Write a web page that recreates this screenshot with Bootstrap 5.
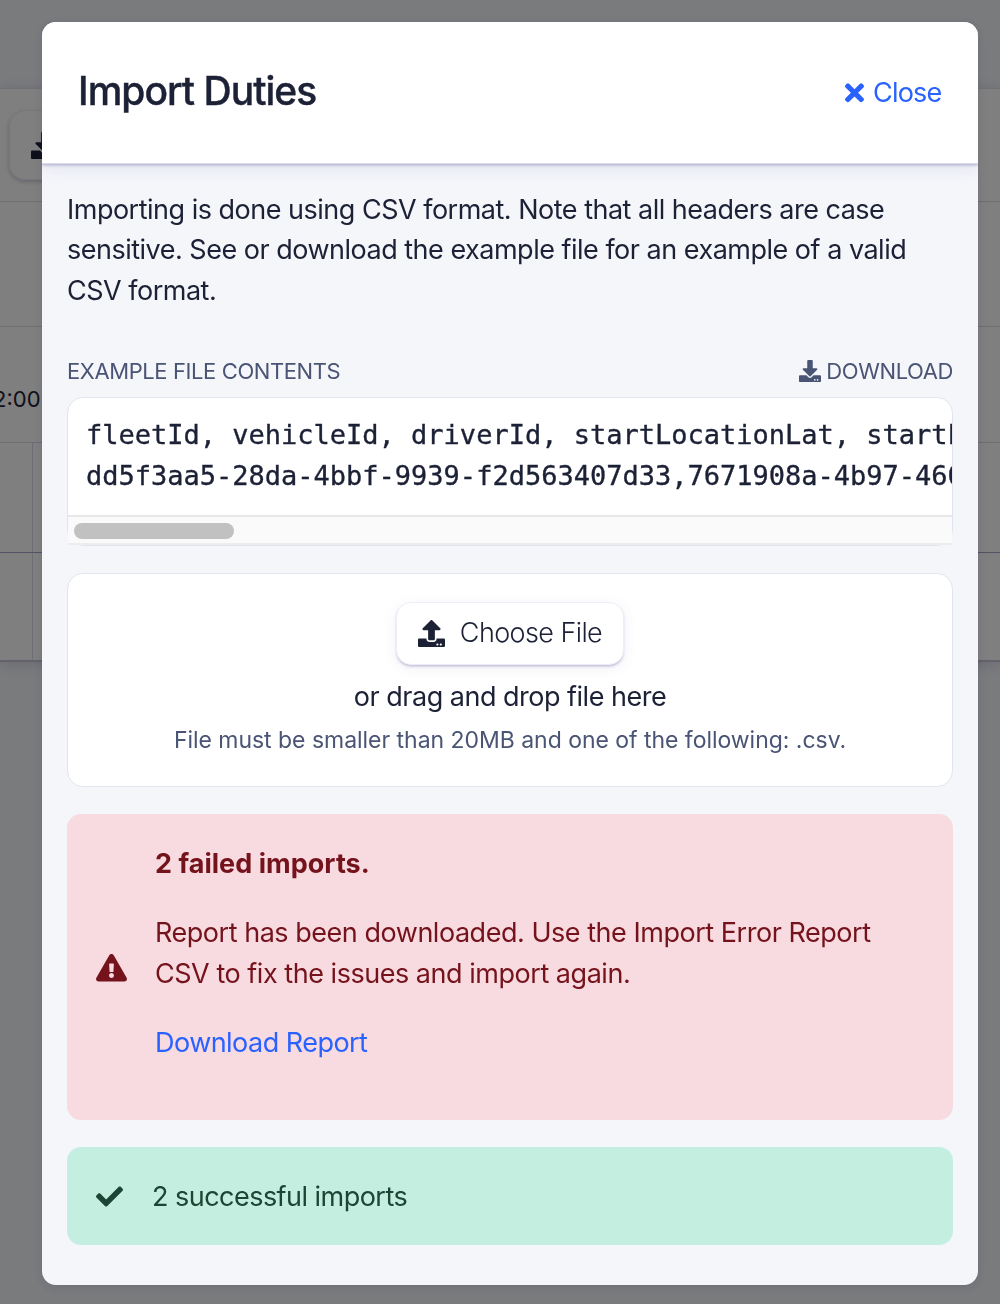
<!DOCTYPE html>
<html lang="en">
<head>
<meta charset="utf-8">
<meta name="viewport" content="width=device-width, initial-scale=1">
<title>Import Duties</title>
<link href="https://cdn.jsdelivr.net/npm/bootstrap@5.3.0/dist/css/bootstrap.min.css" rel="stylesheet">
<style>
  html, body { height: 100%; overflow: hidden; }
  body { font-family: Inter, "Liberation Sans", sans-serif; font-size: 27px; line-height: 40.5px; color: #1c2136; background: #f4f6fa; }
  svg { fill: currentColor; flex: none; display: block; }

  /* page behind the modal */
  .app-top { height: 88px; }
  .app-panel { height: 574px; background: #fff; border-top: 1px solid #e3e5ef; border-bottom: 2px solid #c6c4d8; box-shadow: 0 2px 12px rgba(60,50,120,.18); }
  .app-tools { height: 112px; padding: 21px 0 0 9px; }
  .app-tool-btn { width: 130px; height: 70px; padding-left: 21px; border: 1px solid #eeeef5; border-radius: 16px; box-shadow: 0 2px 4px rgba(60,50,120,.25); }
  .app-line { border-top: 1px solid #dcdce8; }
  .app-r1 { height: 125px; }
  .app-r2 { height: 116px; font-size: 22px; padding-top: 52px; }
  .app-r2 span { margin-left: -7px; }
  .app-cells { padding-left: 32px; }
  .app-cells > div { border-left: 1px solid #dcdaea; }
  .app-r3 { height: 110px; }
  .app-r4 { height: 108px; border-color: #a5a5c8; }
  .modal-backdrop { --bs-backdrop-opacity: .5; }

  /* modal */
  .modal-dialog { width: 936px; max-width: none; margin: 22px 0 0 42px; }
  .modal-content { height: 1263px; border: 0; border-radius: 14px; background: #f4f6fa; color: #1c2136; overflow: hidden; box-shadow: 0 2px 10px rgba(50,40,90,.16); }
  .modal-header { height: 142px; padding: 0 36px; background: #fff; border-bottom: 1px solid #dcdaea; border-radius: 0; box-shadow: 0 1px 3px rgba(80,70,150,.4), 0 4px 16px rgba(80,70,150,.1); z-index: 1; }
  .modal-title { font-size: 39px; font-weight: 500; line-height: 48px; letter-spacing: -.98px; margin-bottom: 4px; -webkit-text-stroke: .4px #1c2136; }
  .blue-link { color: #2962ff; text-decoration: none; }
  .close-link { gap: 9px; letter-spacing: -.8px; padding-right: .5px; }
  .close-link span { padding-top: 1px; }
  .modal-body { padding: 26px 25px 0; }
  .intro { margin-bottom: 42px; line-height: 40.33px; letter-spacing: -.5px; }
  .label-row { height: 36px; margin-bottom: 8px; font-size: 22px; line-height: 36px; letter-spacing: -.4px; color: #4a5474; }
  .label-right { gap: 5px; }
  .csv-box, .drop-box { background: #fff; border: 1px solid #e2e5ef; border-radius: 16px; }
  .csv-box { height: 149px; margin-bottom: 27px; }
  .csv-box pre { height: 117px; margin: 0; padding: 17.3px 0 0 18px; overflow: hidden; border-radius: 15px 15px 0 0; font: 27px/40.5px "DejaVu Sans Mono", monospace; color: #1c2136; -webkit-text-stroke: .35px #1c2136; }
  .csv-track { height: 30px; padding: 6px; background: #fafafa; border-top: 2px solid #e8e8e8; border-bottom: 2px solid #ededed; }
  .csv-thumb { width: 160px; height: 16px; border-radius: 8px; background: #c1c1c1; }
  .drop-box { height: 214px; margin-bottom: 27px; padding-top: 28px; }
  .choose-btn { width: 228px; height: 63px; gap: 15px; font-size: 27px; font-weight: 300; letter-spacing: -.6px; background: #fff; color: #1c2136; border: 1px solid #efeef6; border-radius: 15px; box-shadow: 0 2px 3px -1px rgba(80,70,150,.4), 0 3px 14px rgba(80,70,150,.08); }
  .drop-text { margin-top: 12px; letter-spacing: -.5px; }
  .drop-hint { margin-top: 5px; font-size: 23px; line-height: 36px; letter-spacing: -.03px; color: #4a5474; }
  .note { border-radius: 14px; border: 0; margin: 0; }
  .note-fail { height: 306px; margin-bottom: 27px; padding: 2px 29px 0; gap: 28px; background: #f8dbe0; color: #75131c; }
  .note-fail p { margin-bottom: 28.5px; letter-spacing: -.47px; }
  .note-fail .fail-head { letter-spacing: .03px; }
  .note-fail .fail-text { line-height: 40.9px; }
  .note-fail .fail-link { letter-spacing: -.53px; }
  .note-ok { height: 98px; padding: 2px 29px 0; gap: 29px; background: #c4eee0; color: #1d4535; letter-spacing: -.53px; }
  .note-ok span { padding-top: 1px; }
</style>
</head>
<body>
<svg width="0" height="0" class="position-absolute" aria-hidden="true">
  <symbol id="i-download" viewBox="0 0 512 512"><path d="M216 0h80c13.3 0 24 10.7 24 24v168h87.7c17.8 0 26.7 21.5 14.1 34.1L269.7 378.3c-7.5 7.5-19.8 7.5-27.3 0L90.1 226.1c-12.6-12.6-3.7-34.1 14.1-34.1H192V24c0-13.3 10.7-24 24-24zm296 376v112c0 13.3-10.7 24-24 24H24c-13.3 0-24-10.7-24-24V376c0-13.3 10.7-24 24-24h146.7l49 49c20.1 20.1 52.5 20.1 72.6 0l49-49H488c13.3 0 24 10.7 24 24zm-124 88c0-11-9-20-20-20s-20 9-20 20 9 20 20 20 20-9 20-20zm64 0c0-11-9-20-20-20s-20 9-20 20 9 20 20 20 20-9 20-20z"/></symbol>
</svg>

<div class="app-top"></div>
<div class="app-panel">
  <div class="app-tools"><div class="app-tool-btn d-flex align-items-center"><svg width="27" height="27"><use href="#i-download"/></svg></div></div>
  <div class="app-line app-r1"></div>
  <div class="app-line app-r2"><span>2:00</span></div>
  <div class="app-line app-r3 app-cells"><div class="h-100"></div></div>
  <div class="app-line app-r4 app-cells"><div class="h-100"></div></div>
</div>

<div class="modal-backdrop show"></div>
<div class="modal d-block overflow-hidden" tabindex="-1" role="dialog" aria-labelledby="import-title">
  <div class="modal-dialog">
    <div class="modal-content">
      <div class="modal-header d-flex justify-content-between align-items-center">
        <h1 class="modal-title" id="import-title">Import Duties</h1>
        <a href="#" class="blue-link close-link d-flex align-items-center">
          <svg width="19" height="27.6" viewBox="0 0 352 512"><path d="M242.72 256l100.07-100.07c12.28-12.28 12.28-32.19 0-44.48l-22.24-22.24c-12.28-12.28-32.19-12.28-44.48 0L176 189.28 75.93 89.21c-12.28-12.28-32.19-12.28-44.48 0L9.21 111.45c-12.28 12.28-12.28 32.19 0 44.48L109.28 256 9.21 356.07c-12.28 12.28-12.28 32.19 0 44.48l22.24 22.24c12.28 12.28 32.2 12.28 44.48 0L176 322.72l100.07 100.07c12.28 12.28 32.2 12.28 44.48 0l22.24-22.24c12.28-12.28 12.28-32.19 0-44.48L242.72 256z"/></svg>
          <span>Close</span>
        </a>
      </div>
      <div class="modal-body">
        <p class="intro">Importing is done using CSV format. Note that all headers are case<br>sensitive. See or download the example file for an example of a valid<br>CSV format.</p>

        <div class="label-row d-flex justify-content-between align-items-center">
          <span class="label-left">EXAMPLE FILE CONTENTS</span>
          <span class="label-right d-flex align-items-center"><svg width="22" height="22"><use href="#i-download"/></svg><span>DOWNLOAD</span></span>
        </div>
        <div class="csv-box">
          <pre>fleetId, vehicleId, driverId, startLocationLat, startLocationLng
dd5f3aa5-28da-4bbf-9939-f2d563407d33,7671908a-4b97-460f-8d33</pre>
          <div class="csv-track"><div class="csv-thumb"></div></div>
        </div>

        <div class="drop-box d-flex flex-column align-items-center">
          <button type="button" class="btn choose-btn d-flex align-items-center justify-content-center p-0">
            <svg width="27" height="27" viewBox="0 0 512 512"><path d="M296 384h-80c-13.3 0-24-10.7-24-24V192h-87.7c-17.8 0-26.7-21.5-14.1-34.1L242.3 5.7c7.5-7.5 19.8-7.5 27.3 0l152.2 152.2c12.6 12.6 3.7 34.1-14.1 34.1H320v168c0 13.3-10.7 24-24 24zm216-8v112c0 13.3-10.7 24-24 24H24c-13.3 0-24-10.7-24-24V376c0-13.3 10.7-24 24-24h136v8c0 30.9 25.1 56 56 56h80c30.9 0 56-25.1 56-56v-8h136c13.3 0 24 10.7 24 24zm-124 88c0-11-9-20-20-20s-20 9-20 20 9 20 20 20 20-9 20-20zm64 0c0-11-9-20-20-20s-20 9-20 20 9 20 20 20 20-9 20-20z"/></svg>
            <span>Choose File</span>
          </button>
          <div class="drop-text">or drag and drop file here</div>
          <div class="drop-hint">File must be smaller than 20MB and one of the following: .csv.</div>
        </div>

        <div class="alert note note-fail d-flex align-items-center" role="alert">
          <svg width="31" height="27.5" viewBox="0 0 576 512"><path d="M569.517 440.013C587.975 472.007 564.806 512 527.94 512H48.054c-36.937 0-59.999-40.055-41.577-71.987L246.423 23.985c18.467-32.009 64.72-31.951 83.154 0l239.94 416.028zM288 354c-25.405 0-46 20.595-46 46s20.595 46 46 46 46-20.595 46-46-20.595-46-46-46zm-43.673-165.346l7.418 136c.347 6.364 5.609 11.346 11.982 11.346h48.546c6.373 0 11.635-4.982 11.982-11.346l7.418-136c.375-6.874-5.098-12.654-11.982-12.654h-63.383c-6.884 0-12.356 5.78-11.981 12.654z"/></svg>
          <div>
            <p class="fail-head fw-bold">2 failed imports.</p>
            <p class="fail-text">Report has been downloaded. Use the Import Error Report<br>CSV to fix the issues and import again.</p>
            <p class="fail-link"><a href="#" class="blue-link">Download Report</a></p>
          </div>
        </div>

        <div class="alert note note-ok d-flex align-items-center" role="status">
          <svg width="27" height="27" viewBox="0 0 512 512"><path d="M173.898 439.404l-166.4-166.4c-9.997-9.997-9.997-26.206 0-36.204l36.203-36.204c9.997-9.998 26.207-9.998 36.204 0L192 312.69 432.095 72.596c9.997-9.997 26.207-9.997 36.204 0l36.203 36.204c9.997 9.997 9.997 26.206 0 36.204l-294.4 294.401c-9.998 9.997-26.207 9.997-36.204-.001z"/></svg>
          <span>2 successful imports</span>
        </div>
      </div>
    </div>
  </div>
</div>
<script src="https://cdn.jsdelivr.net/npm/bootstrap@5.3.0/dist/js/bootstrap.bundle.min.js"></script>
</body>
</html>
